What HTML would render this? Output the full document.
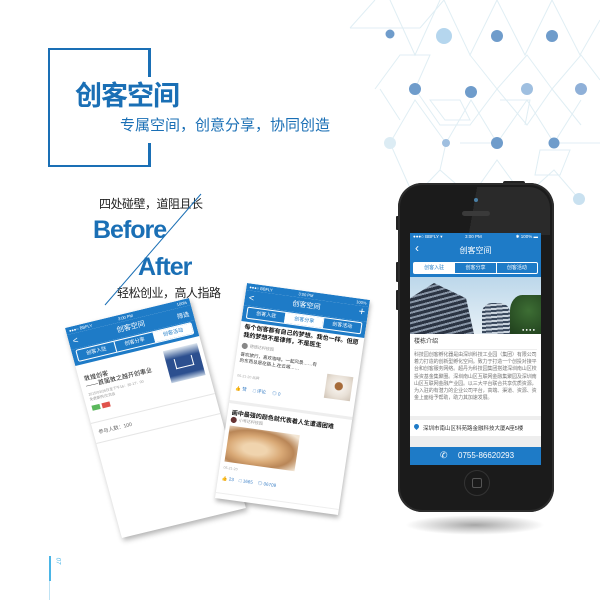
<!DOCTYPE html>
<html><head><meta charset="utf-8">
<style>
*{margin:0;padding:0;box-sizing:border-box}
body{width:600px;height:600px;background:#fff;position:relative;overflow:hidden;font-family:"Liberation Sans","Noto Sans CJK SC",sans-serif}
.a{position:absolute}
.blue{color:#1a6fb5}
.card{position:absolute;left:0;top:0;transform-origin:0 0;background:#fff;overflow:hidden;box-shadow:1px 3px 5px rgba(0,0,0,.3)}
.sb{background:#1e7bc7;color:#fff;font-size:4px;height:7px;position:relative}
.nav{background:#1e7bc7;color:#fff;position:relative}
.tabs{display:flex;border:1px solid #fff;border-radius:2px;margin:0 4px}
.tabs div{flex:1;text-align:center;font-size:5px;color:#fff;border-left:1px solid #fff;line-height:10px}
.tabs div:first-child{border-left:none}
.tabs .on{background:#fff;color:#1e7bc7}
</style></head><body>

<!-- background lattice -->
<svg class="a" style="left:340px;top:0" width="260" height="220" viewBox="340 0 260 220">
<g stroke="#e0eef4" stroke-width="1" fill="none">
<path d="M350 28 L375 0 M350 28 L420 28 M390 0 L415 55 L440 0 M420 28 L444 0 M444 0 L470 55 L497 0 M497 0 L525 55 L552 0 M552 0 L580 55 L600 20"/>
<path d="M375 89 L400 55 L430 55 L415 89 L440 125 L470 125 L497 89 L470 55 M497 89 L527 55 L552 89 L527 125 L497 89 M552 89 L581 55 L600 80 M552 89 L581 125"/>
<path d="M390 143 L415 100 L446 143 L471 100 L497 143 L527 100 L554 143 L581 100 M390 143 L414 197 L440 170 L471 197 L497 160 L524 197 L554 170 L579 199 M440 170 L446 143 M554 143 L600 143 M497 143 L460 143"/>
<path d="M430 100 L460 100 L470 120 L445 120 Z M500 100 L530 100 L525 125 M540 150 L570 150 L560 175 L535 175 Z M380 89 L400 120"/>
</g>
<g fill="#6f9ccb">
<circle cx="390" cy="34" r="4.5"/><circle cx="444" cy="36" r="8" fill="#b5d6ee"/><circle cx="497" cy="36" r="6"/><circle cx="552" cy="36" r="6"/>
<circle cx="415" cy="89" r="6"/><circle cx="471" cy="92" r="6"/><circle cx="527" cy="89" r="6" fill="#9fbfe0"/><circle cx="581" cy="89" r="6" fill="#8fb0d8"/>
<circle cx="390" cy="143" r="6" fill="#dcecf4"/><circle cx="446" cy="143" r="4" fill="#9fbfe0"/><circle cx="497" cy="143" r="6"/><circle cx="554" cy="143" r="5.5"/>
<circle cx="414" cy="197" r="3.5" fill="#e3eff6"/><circle cx="471" cy="197" r="4" fill="#8fb0d8"/><circle cx="524" cy="197" r="4" fill="#8fb0d8"/><circle cx="579" cy="199" r="6" fill="#c9e1f0"/>
</g>
</svg>

<!-- title frame -->
<div class="a" style="left:48px;top:48px;width:103px;height:119px;border:2.5px solid #1a6fb5;border-right:none"></div>
<div class="a" style="left:148px;top:48px;width:2.5px;height:29px;background:#1a6fb5"></div>
<div class="a" style="left:148px;top:143px;width:2.5px;height:24px;background:#1a6fb5"></div>
<div class="a blue" style="left:75px;top:80px;font-size:27px;font-weight:bold;line-height:32px;letter-spacing:-1px">创客空间</div>
<div class="a blue" style="left:120px;top:117px;font-size:15px;line-height:18px;white-space:nowrap">专属空间，创意分享，协同创造</div>

<div class="a" style="left:99px;top:197px;font-size:12px;color:#222;line-height:14px;white-space:nowrap;letter-spacing:-.5px">四处碰壁，道阻且长</div>
<div class="a blue" style="left:93px;top:215px;font-size:25px;font-weight:bold;line-height:30px;letter-spacing:-1px">Before</div>
<div class="a blue" style="left:138px;top:252px;font-size:25px;font-weight:bold;line-height:30px;letter-spacing:-1px">After</div>
<div class="a" style="left:117px;top:286px;font-size:12px;color:#222;line-height:14px;white-space:nowrap;letter-spacing:-.5px">轻松创业，高人指路</div>
<svg class="a" style="left:0;top:0" width="300" height="320"><line x1="201" y1="194" x2="105" y2="305" stroke="#1a6fb5" stroke-width="1"/></svg>

<!-- left tilted card -->
<div class="card" style="width:124px;height:210px;transform:matrix(1,-0.242,0.271,1,65,328)">
 <div class="sb"><span style="position:absolute;left:3px;top:1px">●●●○ BBFLY</span><span style="position:absolute;left:52px;top:1px">3:00 PM</span><span style="position:absolute;right:3px;top:1px">100%</span></div>
 <div class="nav" style="height:15px"><div style="position:absolute;left:4px;top:2px;font-size:9px">&lt;</div><div style="text-align:center;font-size:7px;line-height:15px">创客空间</div><div style="position:absolute;right:4px;top:3px;font-size:6px">筛选</div></div>
 <div class="nav" style="padding:1px 0 3px"><div class="tabs"><div>创客入驻</div><div>创客分享</div><div class="on">创客活动</div></div></div>
 <div style="position:relative;height:58px;border-bottom:1px solid #e6e6e6">
  <div class="a" style="left:5px;top:12px;font-size:6px;line-height:7px;color:#222">敦煌创客<br>——首届敦之越开创事业</div>
  <div class="a" style="left:5px;top:28px;font-size:3.5px;line-height:5px;color:#999">2015/03/26日至下午16：30-17：00<br>免费案例/交流会</div>
  <div class="a" style="left:5px;top:41px;width:8px;height:5px;background:#5bb85c"></div>
  <div class="a" style="left:15px;top:41px;width:8px;height:5px;background:#e0534b"></div>
  <div class="a" style="left:86px;top:6px;width:34px;height:32px;background:linear-gradient(#dde6ef,#2c4f8f 30%,#2c4f8f 80%,#c6d4e5)"></div>
  <div class="a" style="left:94px;top:16px;width:18px;height:10px;border:1.5px solid #fff;border-top:none"></div>
 </div>
 <div style="font-size:5px;color:#666;padding:6px 5px;border-bottom:1px solid #e6e6e6">参与人数：100</div>
</div>

<!-- right tilted card -->
<div class="card" style="width:123px;height:215px;transform:matrix(1,0.138,-0.149,1,247,283)">
 <div class="sb"><span style="position:absolute;left:3px;top:1px">●●●○ BBFLY</span><span style="position:absolute;left:52px;top:1px">3:00 PM</span><span style="position:absolute;right:3px;top:1px">100%</span></div>
 <div class="nav" style="height:15px"><div style="position:absolute;left:4px;top:2px;font-size:9px">&lt;</div><div style="text-align:center;font-size:7px;line-height:15px">创客空间</div><div style="position:absolute;right:3px;top:0;font-size:11px">+</div></div>
 <div class="nav" style="padding:1px 0 3px"><div class="tabs"><div>创客入驻</div><div class="on">创客分享</div><div>创客活动</div></div></div>
 <div style="position:relative;height:82px;border-bottom:3px solid #eee">
  <div class="a" style="left:4px;top:3px;font-size:6px;line-height:7.5px;color:#111;font-weight:bold;width:116px">每个创客都有自己的梦想。我也一样。但愿我的梦想不是律师，不是医生</div>
  <div class="a" style="left:4px;top:21px;width:6px;height:6px;border-radius:50%;background:#888"></div>
  <div class="a" style="left:12px;top:21px;font-size:4px;color:#999">德德达科技园</div>
  <div class="a" style="left:4px;top:30px;font-size:4.5px;line-height:5.5px;color:#333;width:80px">喜欢旅行，喜欢咖啡。一起风景……有的东西总是在路上,在云端……</div>
  <div class="a" style="left:92px;top:40px;width:26px;height:24px;background:radial-gradient(circle at 50% 45%,#a66b3a 20%,#f4efe9 24%,#e8e0d6 60%,#cfc3b5)"></div>
  <div class="a" style="left:4px;top:52px;font-size:3.5px;color:#aaa">05-21-20 品牌</div>
  <div class="a" style="left:4px;top:64px;font-size:4.5px;color:#3a7fc6;white-space:nowrap">👍 赞 &nbsp;&nbsp;&nbsp;&nbsp;□ 评论 &nbsp;&nbsp;&nbsp;&nbsp;◎ 0</div>
 </div>
 <div style="position:relative;height:90px;border-bottom:1px solid #eee">
  <div class="a" style="left:4px;top:4px;font-size:6px;color:#111;font-weight:bold;white-space:nowrap">画中最强的颜色就代表着人生遭遇困难</div>
  <div class="a" style="left:4px;top:13px;width:6px;height:6px;border-radius:50%;background:#633"></div>
  <div class="a" style="left:12px;top:13px;font-size:4px;color:#999">小号达科技园</div>
  <div class="a" style="left:4px;top:22px;width:70px;height:36px;background:radial-gradient(ellipse at 40% 55%,#f0d4ae 20%,#d9a976 45%,#b98657 65%,#f3e6d4 90%)"></div>
  <div class="a" style="left:4px;top:62px;font-size:3.5px;color:#aaa">05-21-20</div>
  <div class="a" style="left:4px;top:72px;font-size:4.5px;color:#3a7fc6;white-space:nowrap">👍 23 &nbsp;&nbsp;&nbsp;□ 1665 &nbsp;&nbsp;&nbsp;◎ 06709</div>
 </div>
</div>

<!-- phone shadow -->
<div class="a" style="left:405px;top:515px;width:140px;height:20px;border-radius:50%;background:radial-gradient(ellipse,rgba(0,0,0,.35),rgba(0,0,0,0) 70%)"></div>
<!-- phone -->
<div class="a" style="left:396px;top:216px;width:3px;height:14px;background:#222;border-radius:1px"></div>
<div class="a" style="left:396px;top:262px;width:3px;height:20px;background:#222;border-radius:1px"></div>
<div class="a" style="left:396px;top:290px;width:3px;height:20px;background:#222;border-radius:1px"></div>
<div class="a" style="left:503px;top:181px;width:22px;height:4px;background:#222;border-radius:2px"></div>
<div class="a" style="left:398px;top:183px;width:156px;height:329px;border-radius:24px;background:#1b1b1b;box-shadow:inset 0 0 0 2px #2c2c2c"></div>
<div class="a" style="left:402px;top:187px;width:148px;height:48px;border-radius:21px 21px 0 0;background:linear-gradient(100deg,#1b1b1b 48%,#2a2a2a 48%)"></div>
<div class="a" style="left:474px;top:198px;width:4px;height:4px;border-radius:50%;background:#4a7fa5"></div>
<div class="a" style="left:462px;top:211px;width:28px;height:5px;border-radius:3px;background:#3a3a3a"></div>
<div class="a" style="left:464px;top:470px;width:26px;height:26px;border-radius:50%;border:1.5px solid #333;background:#1a1a1a"></div>
<div class="a" style="left:472px;top:478px;width:10px;height:10px;border-radius:2px;border:1px solid #555"></div>

<!-- phone screen -->
<div class="a" style="left:410px;top:233px;width:131px;height:232px;background:#eee;overflow:hidden">
 <div style="background:#1e7bc7;height:29px;position:relative;color:#fff">
  <div class="a" style="left:3px;top:1px;font-size:4.5px">●●●○ BBFLY ▾</div>
  <div class="a" style="left:55px;top:1px;font-size:4.5px">3:00 PM</div>
  <div class="a" style="right:3px;top:1px;font-size:4.5px">✱ 100% ▬</div>
  <div class="a" style="left:5px;top:9px;font-size:12px;line-height:12px">‹</div>
  <div class="a" style="left:0;width:131px;top:12px;text-align:center;font-size:8px">创客空间</div>
 </div>
 <div style="background:#1e7bc7;height:15px;padding:0 3px 3px"><div class="tabs" style="margin:0;height:12px"><div class="on" style="line-height:10px">创客入驻</div><div style="line-height:10px">创客分享</div><div style="line-height:10px">创客活动</div></div></div>
 <div style="height:57px;position:relative;background:linear-gradient(#bcd7ea,#e8f1f7)">
  <div class="a" style="left:0;top:6px;width:80px;height:51px;background:repeating-linear-gradient(165deg,#2b3443 0 3px,#8895a6 3px 5px);clip-path:polygon(0 30%,30% 0,70% 30%,80% 100%,0 100%)"></div>
  <div class="a" style="left:72px;top:26px;width:28px;height:31px;background:repeating-linear-gradient(175deg,#3b4a5e 0 2px,#c9d3dd 2px 4px);border-radius:10px 10px 0 0"></div>
  <div class="a" style="left:100px;top:18px;width:31px;height:39px;background:radial-gradient(circle at 60% 40%,#3d6e34,#1f3e1c);border-radius:40% 0 0 0"></div>
  <div class="a" style="right:6px;bottom:2px;font-size:4px;color:#fff">● ● ● ●</div>
 </div>
 <div style="background:#fff;height:82px;padding:4px 4px 0">
  <div style="font-size:6px;color:#333;line-height:9px">楼栋介绍</div>
  <div style="border-top:1px solid #eee;margin-top:2px;padding-top:2px;font-size:5px;line-height:7.2px;color:#777;letter-spacing:-.1px">科技园创客孵化器是由深圳科技工业园（集团）有限公司着力打造的创新型孵化空间。致力于打造一个创投对接平台和创客服务网络。超丹为科技园集团搭建深圳南山区校投资基金集聚圈。深圳南山区互联网金融集聚园及深圳南山区互联网金融产业园。以三大平台联合共享优质资源，为入驻的有潜力的企业公司平台，高端、渠道、资源、资金上面给予帮助，助力其加速发展。</div>
 </div>
 <div style="height:4px"></div>
 <div style="background:#fff;height:16px;position:relative">
  <div class="a" style="left:4px;top:4px;width:5px;height:5px;border-radius:50% 50% 50% 0;transform:rotate(-45deg);background:#1e7bc7"></div>
  <div class="a" style="left:13px;top:4px;font-size:5.5px;color:#333;white-space:nowrap">深圳市南山区科苑路金融科技大厦A座5楼</div>
 </div>
 <div style="height:11px"></div>
 <div style="background:#1e7bc7;height:18px;position:relative;color:#fff">
  <div class="a" style="left:30px;top:3px;font-size:9px">✆</div>
  <div class="a" style="left:48px;top:4px;font-size:8px">0755-86620293</div>
 </div>
</div>

<!-- page marker -->
<div class="a" style="left:49px;top:556px;width:2px;height:25px;background:#4ab5e6"></div>
<div class="a" style="left:49px;top:581px;width:1px;height:19px;background:#bfe3f4"></div>
<div class="a" style="left:54px;top:558px;font-size:6px;color:#4ab5e6;transform:rotate(90deg);font-style:italic">07</div>
</body></html>
